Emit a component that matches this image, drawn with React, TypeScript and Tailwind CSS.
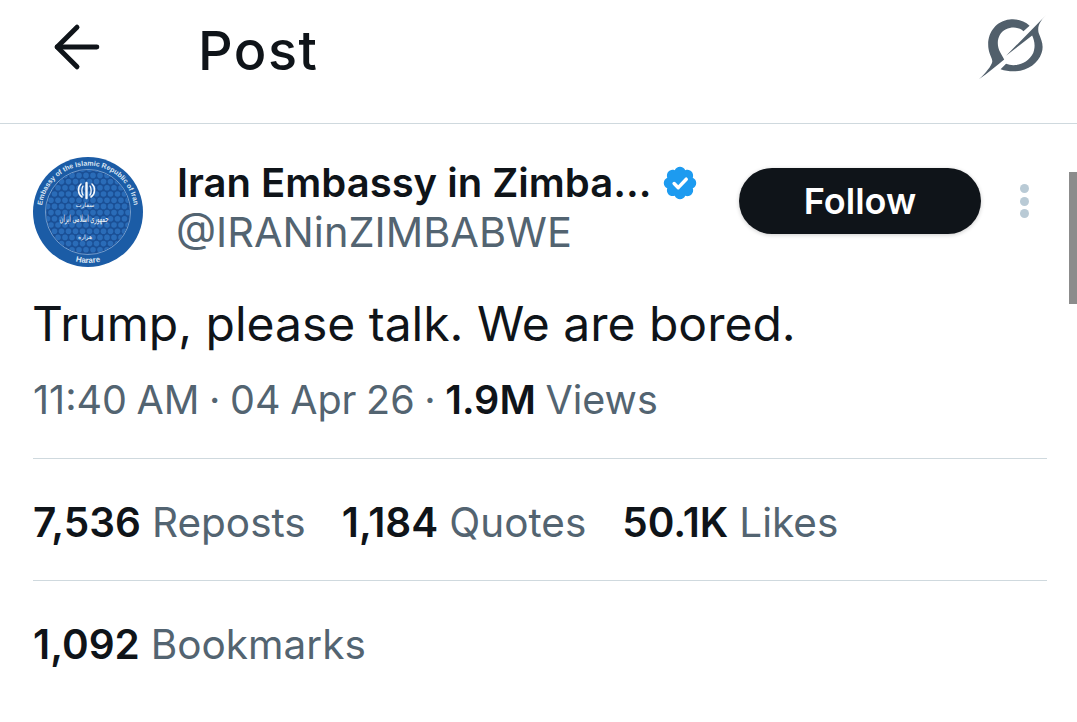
import { ArrowLeft } from "lucide-react"

function Seal() {
  const cells: { x: number; y: number }[] = []
  for (let r = 0; r < 16; r++) {
    for (let c = 0; c < 16; c++) {
      cells.push({ x: 4 + c * 7 + (r % 2 ? 3.5 : 0), y: 6 + r * 6.2 })
    }
  }
  return (
    <svg viewBox="0 0 110 110" className="size-[110px] shrink-0">
      <defs>
        <path id="ring-top" d="M 8.500 55 A 46.500 46.500 0 0 1 101.500 55" />
        <path id="ring-bottom" d="M 4 55 A 51 51 0 0 0 106 55" />
        <clipPath id="inner">
          <circle cx="55" cy="55" r="42" />
        </clipPath>
      </defs>
      <circle cx="55" cy="55" r="55" fill="#1b5ca6" />
      <circle cx="55" cy="55" r="42.500" fill="#1a4f95" stroke="#9dbcdf" strokeWidth="0.7" />
      <g clipPath="url(#inner)">
        {cells.map((d, i) => (
          <circle key={i} cx={d.x} cy={d.y} r="2.800" fill="#2a6cb8" />
        ))}
      </g>
      <text fontSize="7" fontWeight="600" fill="#dbe7f4" fontFamily="'Liberation Sans', sans-serif">
        <textPath href="#ring-top" startOffset="50%" textAnchor="middle">
          Embassy of the Islamic Republic of Iran
        </textPath>
      </text>
      <text fontSize="8" fontWeight="700" fill="#dbe7f4" fontFamily="'Liberation Sans', sans-serif">
        <textPath href="#ring-bottom" startOffset="50%" textAnchor="middle">
          Harare
        </textPath>
      </text>
      <g fill="none" stroke="#f5f8fc" strokeLinecap="round">
        <path d="M53.500 26v15" strokeWidth="2.400" />
        <path d="M50 29c-1.500 2.500-1.500 7 0 9" strokeWidth="1.400" />
        <path d="M57 29c1.500 2.500 1.500 7 0 9" strokeWidth="1.400" />
        <path d="M48 27c-3.500 3-3.500 10 1 13" strokeWidth="1.600" />
        <path d="M59 27c3.500 3 3.500 10-1 13" strokeWidth="1.600" />
      </g>
      <g fill="#f5f8fc" fontFamily="'DejaVu Sans', sans-serif" textAnchor="middle">
        <text x="52" y="50" fontSize="6">سفارت</text>
        <text transform="translate(51 65) scale(0.62 1.15)" fontSize="8.500">جمهوری اسلامی ایران</text>
        <text x="52" y="82" fontSize="6">هراره</text>
      </g>
    </svg>
  )
}

function GrokLogo() {
  return (
    <svg viewBox="60 45 204 192" className="h-[70px] w-[74px]">
      <path
        d="M205 85C190 70 165 65 150 68 110 72 85 110 92 150 94 165 103 175 102 185 100 195 85 215 65 233 90 215 115 195 135 178L125 160C110 135 118 105 140 95 155 88 175 88 188 100Z"
        fill="#515f6b"
      />
      <path
        d="M258 48C235 70 225 85 230 105 238 125 245 140 238 160 225 200 175 222 125 205L140 190C165 200 200 190 215 160 222 140 218 125 212 112L140 168Z"
        fill="#515f6b"
      />
    </svg>
  )
}

function Verified() {
  return (
    <svg viewBox="0 0 22 22" className="size-[38px] shrink-0">
      <path
        d="M20.396 11c-.018-.646-.215-1.275-.57-1.816-.354-.54-.852-.972-1.438-1.246.223-.607.27-1.264.14-1.897-.131-.634-.437-1.218-.882-1.687-.47-.445-1.053-.75-1.687-.882-.633-.13-1.29-.083-1.897.14-.273-.587-.704-1.086-1.245-1.44S11.647 1.62 11 1.604c-.646.017-1.273.213-1.813.568s-.969.854-1.24 1.44c-.608-.223-1.267-.272-1.902-.14-.635.13-1.22.436-1.69.882-.445.47-.749 1.055-.878 1.688-.13.633-.08 1.29.144 1.896-.587.274-1.087.705-1.443 1.245-.356.54-.555 1.17-.574 1.817.02.647.218 1.276.574 1.817.356.54.856.972 1.443 1.245-.224.606-.274 1.263-.144 1.896.13.634.433 1.218.877 1.688.47.443 1.054.747 1.687.878.633.132 1.29.084 1.897-.136.274.586.705 1.084 1.246 1.439.54.354 1.17.551 1.816.569.647-.016 1.276-.213 1.817-.567s.972-.854 1.245-1.44c.604.239 1.266.296 1.903.164.636-.132 1.22-.447 1.68-.907.46-.46.776-1.044.908-1.681s.075-1.299-.165-1.903c.586-.274 1.084-.705 1.439-1.246.354-.54.551-1.17.569-1.816z"
        fill="#1d9bf0"
      />
      <path d="M7.600 11.300l2.400 2.400 4.600-4.900" fill="none" stroke="#fff" strokeWidth="2" strokeLinecap="round" strokeLinejoin="round" />
    </svg>
  )
}

function Stat({ value, label }: { value: string; label: string }) {
  return (
    <span>
      <span className="font-semibold text-[#0f1419]">{value}</span>
      <span className="ml-[11px] text-[#536471]">{label}</span>
    </span>
  )
}

export default function App() {
  return (
    <div className="relative h-[722px] w-[1077px] overflow-hidden bg-white font-['Inter',sans-serif] text-[#0f1419]">
      <header className="flex h-[124px] items-center border-b border-[#cfd9de] pb-[22px] pl-[43px] pr-[26px]">
        <ArrowLeft className="-mt-[8px] size-[68px] text-[#0f1419]" strokeWidth={1.75} />
        <h1 className="ml-[87px] text-[54px] font-medium leading-none tracking-[1.5px]">Post</h1>
        <div className="-mt-[10px] ml-auto">
          <GrokLogo />
        </div>
      </header>

      <div className="pl-[33px] pr-[30px]">
        <div className="flex pt-[33px]">
          <Seal />
          <div className="ml-[33px] w-[563px]">
            <div className="ml-px flex items-center">
              <span className="text-[40px] font-semibold leading-[52px]">Iran Embassy in Zimba...</span>
              <span className="ml-[10px] -mt-[1px]">
                <Verified />
              </span>
            </div>
            <div className="text-[41.500px] leading-[46px] text-[#536471]">@IRANinZIMBABWE</div>
          </div>
          <button className="mt-[11px] h-[66px] w-[242px] rounded-full bg-[#0f1419] text-[36px] font-semibold text-white shadow-[0_1px_4px_rgba(0,0,0,0.2)]">
            Follow
          </button>
          <div className="ml-[39px] mt-[27px] flex flex-col gap-[3.500px]">
            <span className="size-[9px] rounded-full bg-[#b9cad5]" />
            <span className="size-[9px] rounded-full bg-[#b9cad5]" />
            <span className="size-[9px] rounded-full bg-[#b9cad5]" />
          </div>
        </div>

        <p className="-ml-px mt-[23px] text-[48px] leading-[68px]">Trump, please talk. We are bored.</p>

        <div className="mt-[19px] border-b border-[#cfd9de] pb-[35px] text-[39.500px] leading-[46px] text-[#536471] [word-spacing:-1.500px]">
          11:40 AM · 04 Apr 26 · <span className="font-semibold text-[#0f1419]">1.9M</span> Views
        </div>

        <div className="flex h-[122px] items-center gap-[36px] border-b border-[#cfd9de] pt-[8px] text-[40.500px]">
          <Stat value="7,536" label="Reposts" />
          <Stat value="1,184" label="Quotes" />
          <Stat value="50.1K" label="Likes" />
        </div>

        <div className="flex h-[128px] items-center text-[40.500px]">
          <Stat value="1,092" label="Bookmarks" />
        </div>
      </div>

      <div className="absolute right-0 top-[172px] h-[132px] w-[8px] bg-[#8c8c8c]" />
    </div>
  )
}
